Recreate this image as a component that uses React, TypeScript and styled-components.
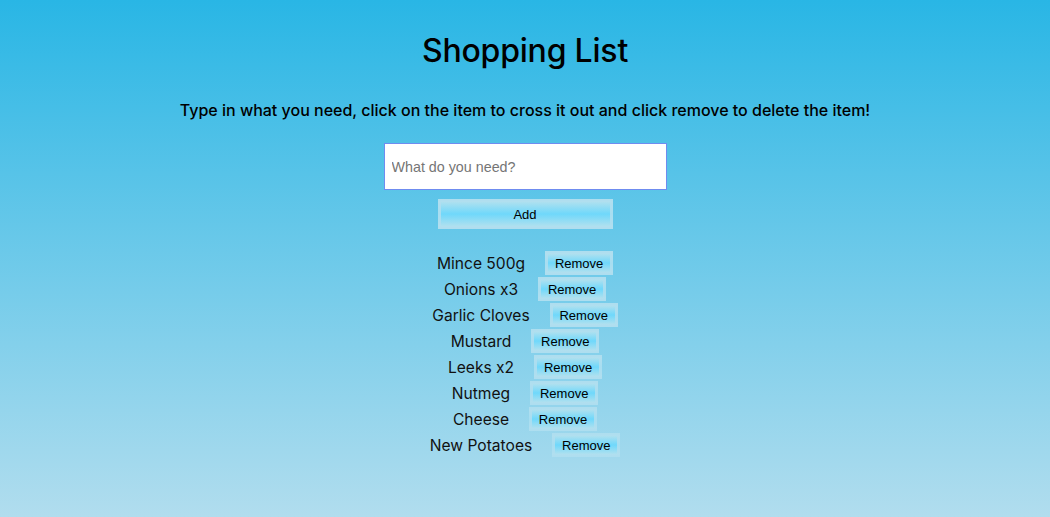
import React, { useState } from "react";
import styled, { createGlobalStyle, css } from "styled-components";

const GlobalStyle = createGlobalStyle`
  html, body { margin: 0; padding: 0; }
  body {
    min-height: 517px;
    background: linear-gradient(to bottom, #29b6e5 0%, #b1ddee 100%);
    font-family: "Inter", "Noto Sans", sans-serif;
    color: #000;
  }
`;

const Page = styled.main`
  display: flex;
  flex-direction: column;
  align-items: center;
  padding-top: 30px;
  min-height: 517px;
  box-sizing: border-box;
`;

const Title = styled.h1`
  margin: 0;
  font-size: 32px;
  font-weight: 500;
  line-height: 42px;
  letter-spacing: -0.2px;
`;

const Subtitle = styled.p`
  margin: 27px 0 0;
  font-size: 16px;
  font-weight: 500;
  line-height: 22px;
`;

const Input = styled.input`
  margin-top: 22px;
  width: 283px;
  height: 47px;
  box-sizing: border-box;
  border: 1px solid #6f8cf0;
  background: #fff;
  padding: 0 7px;
  font-family: "Liberation Sans", Arial, sans-serif;
  font-size: 14.3px;
  outline: none;
  &::placeholder { color: #757575; }
`;

const buttonLook = css`
  box-sizing: border-box;
  border: 3px solid rgba(178, 222, 238, 0.85);
  background: linear-gradient(to bottom, #aee0ef 0%, #6fd8fb 50%, #aee0ef 100%);
  font-family: "Liberation Sans", Arial, sans-serif;
  font-size: 13px;
  color: #000;
  cursor: pointer;
  padding: 0;
`;

const AddButton = styled.button`
  ${buttonLook}
  margin-top: 9px;
  width: 175px;
  height: 30px;
`;

const List = styled.ul`
  list-style: none;
  margin: 21px 0 0;
  padding: 0;
  display: flex;
  flex-direction: column;
  align-items: center;
`;

const Row = styled.li`
  display: flex;
  align-items: center;
  gap: 20px;
  height: 26px;
`;

const ItemName = styled.span<{ $done: boolean }>`
  font-size: 15.6px;
  cursor: pointer;
  color: #111;
  text-decoration: ${(p) => (p.$done ? "line-through" : "none")};
`;

const RemoveButton = styled.button`
  ${buttonLook}
  width: 68px;
  height: 24px;
`;

const initial = [
  "Mince 500g",
  "Onions x3",
  "Garlic Cloves",
  "Mustard",
  "Leeks x2",
  "Nutmeg",
  "Cheese",
  "New Potatoes",
];

export default function App() {
  const [items, setItems] = useState(initial.map((name) => ({ name, done: false })));
  const [text, setText] = useState("");
  const add = () => {
    if (!text.trim()) return;
    setItems([...items, { name: text.trim(), done: false }]);
    setText("");
  };
  return (
    <>
      <GlobalStyle />
      <Page>
        <Title>Shopping List</Title>
        <Subtitle>
          Type in what you need, click on the item to cross it out and click remove to delete the item!
        </Subtitle>
        <Input placeholder="What do you need?" value={text} onChange={(e) => setText(e.target.value)} />
        <AddButton onClick={add}>Add</AddButton>
        <List>
          {items.map((it, i) => (
            <Row key={i}>
              <ItemName
                $done={it.done}
                onClick={() => setItems(items.map((x, j) => (j === i ? { ...x, done: !x.done } : x)))}
              >
                {it.name}
              </ItemName>
              <RemoveButton onClick={() => setItems(items.filter((_, j) => j !== i))}>Remove</RemoveButton>
            </Row>
          ))}
        </List>
      </Page>
    </>
  );
}
